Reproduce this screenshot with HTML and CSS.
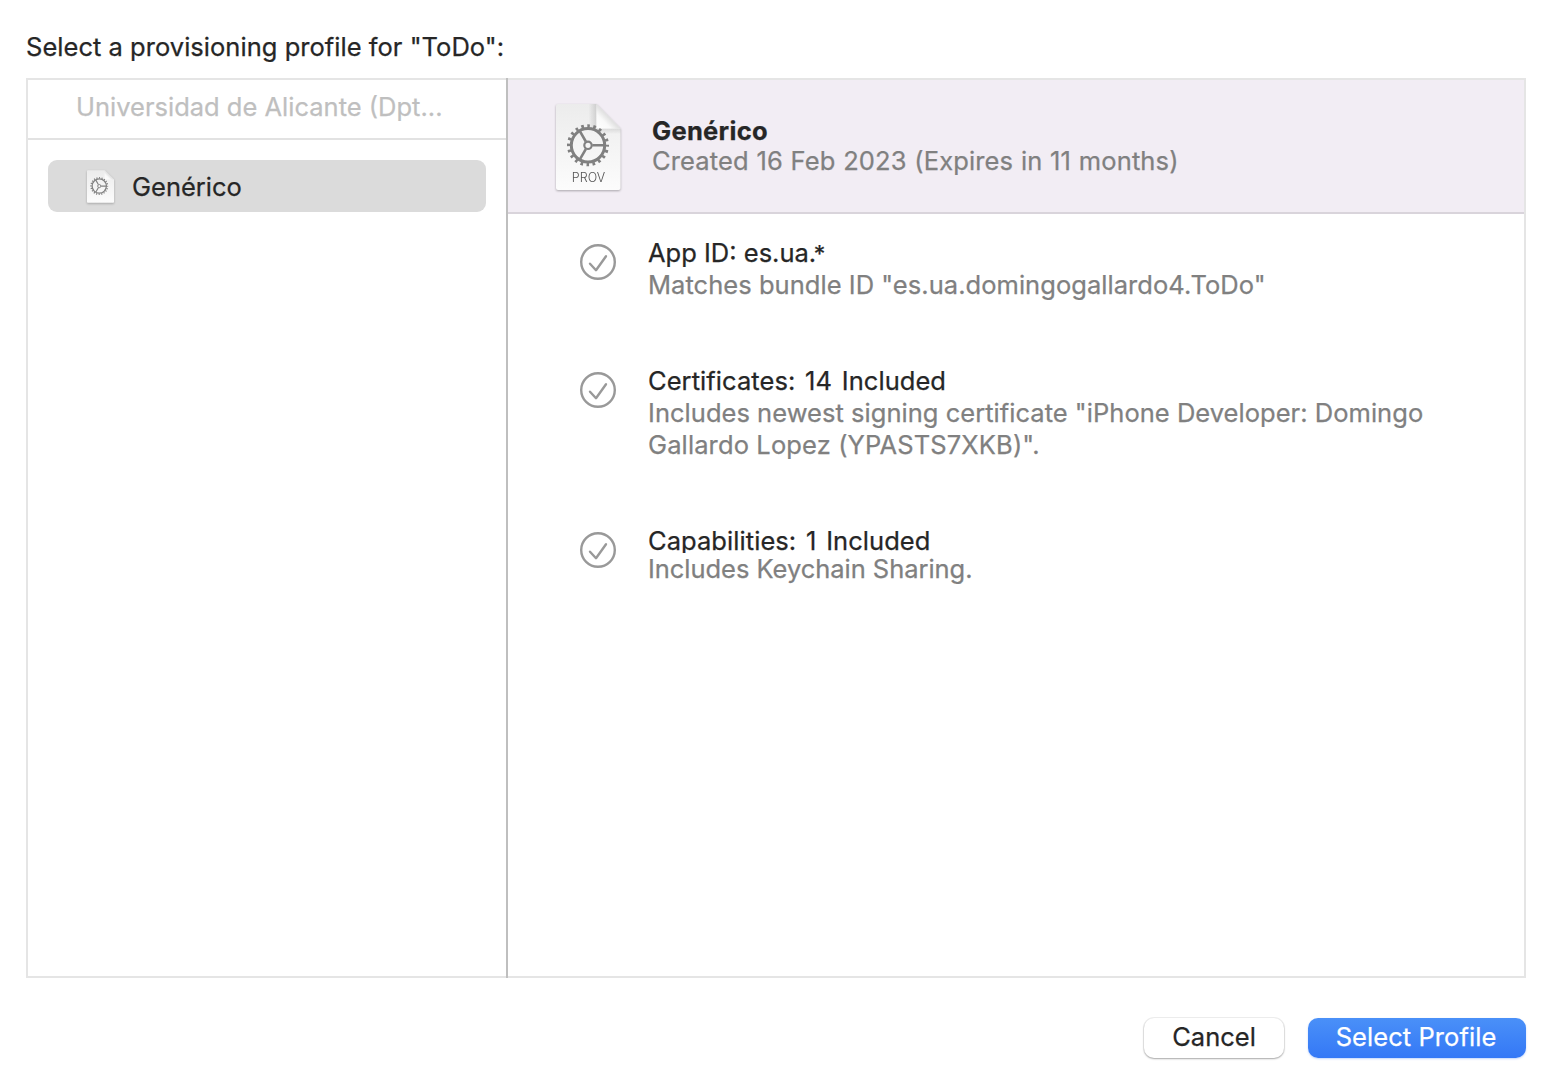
FILE: index.html
```html
<!DOCTYPE html>
<html lang="en">
<head>
<meta charset="utf-8">
<title>Select a provisioning profile</title>
<link rel="stylesheet" href="styles.css">
</head>
<body>
<svg class="defs" width="0" height="0" aria-hidden="true">
  <defs>
    <linearGradient id="paper" x1="0" y1="0" x2="0" y2="1"><stop offset="0" stop-color="#ececec"/><stop offset="1" stop-color="#fcfcfc"/></linearGradient>
    <linearGradient id="fold" x1="0" y1="1" x2="1" y2="0"><stop offset="0" stop-color="#ffffff"/><stop offset=".3" stop-color="#f9f9f9"/><stop offset=".52" stop-color="#dcdcdc"/></linearGradient>
    <linearGradient id="foldshade" x1="0" y1="0" x2="1" y2="0"><stop offset="0" stop-color="#000" stop-opacity="0"/><stop offset="1" stop-color="#000" stop-opacity=".13"/></linearGradient>
    <linearGradient id="foldshadedown" x1="0" y1="1" x2="0" y2="0"><stop offset="0" stop-color="#000" stop-opacity="0"/><stop offset="1" stop-color="#000" stop-opacity=".1"/></linearGradient>
    <symbol id="gear" viewBox="-22 -22 44 44">
      <g fill="none" stroke="#808080">
        <circle r="19.3" stroke-width="3.4" stroke-dasharray="2.6 3.464" stroke-dashoffset="1.3"/>
        <circle r="16.7" stroke-width="3"/>
        <circle r="3.7" stroke-width="2.2"/>
        <path d="M4.3 0H16M-2.2-3.8L-8-13.9M-2.2 3.8L-8 13.9" stroke-width="2.6"/>
      </g>
    </symbol>
    <symbol id="check" viewBox="0 0 38 38">
      <g fill="none" stroke="#999" stroke-width="2.4" stroke-linecap="round" stroke-linejoin="round">
        <circle cx="19" cy="19" r="16.8"/>
        <path d="M11 20.7L17 27.2L27 13.3"/>
      </g>
    </symbol>
  </defs>
</svg>
<main class="sheet">
  <h1 class="prompt">Select a provisioning profile for "ToDo":</h1>
  <section class="panel">
    <aside class="sidebar">
      <div class="team">Universidad de Alicante (Dpt...</div>
      <div class="item">
        <svg class="item-icon" viewBox="0 0 66 80"><path d="M2 0H43L66 23V78Q66 80 64 80H2Q0 80 0 78V2Q0 0 2 0Z" fill="url(#paper)"/><path d="M43 0V23H66Z" fill="url(#fold)"/><use href="#gear" x="7" y="16" width="46" height="46"/></svg>
        <span class="item-name">Genérico</span>
      </div>
    </aside>
    <div class="detail">
      <header class="profile">
        <svg class="profile-icon" viewBox="0 0 65 86"><path d="M2 0H40.5L64.5 24.5V84Q64.5 86 62.5 86H2Q0 86 0 84V2Q0 0 2 0Z" fill="url(#paper)"/><path d="M32.5 0H40.5V24H32.5Z" fill="url(#foldshade)"/><path d="M40.5 24.5H64.5V30H40.5Z" fill="url(#foldshadedown)"/><path d="M40.5 0V22.5Q40.5 24.5 42.5 24.5H64.5Z" fill="url(#fold)"/><use href="#gear" x="10" y="19.3" width="44" height="44"/><text class="doc-label" x="32.5" y="78.4" text-anchor="middle">PROV</text></svg>
        <div>
          <h2 class="profile-name">Genérico</h2>
          <p class="profile-date">Created 16 Feb 2023 (Expires in 11 months)</p>
        </div>
      </header>
      <ul class="checks">
        <li class="check app">
          <svg class="mark"><use href="#check"/></svg>
          <div><h3 class="t-app">App ID: es.ua.<span class="star">*</span></h3><p class="d-app">Matches bundle ID "es.ua.domingogallardo4.ToDo"</p></div>
        </li>
        <li class="check certs">
          <svg class="mark"><use href="#check"/></svg>
          <div><h3 class="t-count">Certificates: 14 Included</h3><p class="d-cert">Includes newest signing certificate "iPhone Developer: Domingo<br><span class="signer">Gallardo Lopez (YPASTS7XKB)".</span></p></div>
        </li>
        <li class="check caps">
          <svg class="mark"><use href="#check"/></svg>
          <div><h3 class="t-count">Capabilities: 1 Included</h3><p class="d-cap">Includes Keychain Sharing.</p></div>
        </li>
      </ul>
    </div>
  </section>
  <footer class="actions">
    <button class="btn cancel">Cancel</button>
    <button class="btn primary">Select Profile</button>
  </footer>
</main>
</body>
</html>
```
FILE: styles.css
```css
* { box-sizing: border-box; }
body { margin: 0; background: #fff; color: #262626; font: 25.5px/32px Inter, "Liberation Sans", sans-serif; -webkit-text-stroke: .25px currentColor; }
h1, h2, h3, p, ul { margin: 0; padding: 0; font-size: inherit; font-weight: 400; white-space: nowrap; }
.defs { position: absolute; }
.sheet { width: 1560px; height: 1080px; padding: 31px 34px 0 26px; }
.prompt { height: 47px; letter-spacing: .03px; }
.panel { display: flex; height: 900px; border: 2px solid #e5e5e5; }
.sidebar { width: 480px; margin: -2px 0; padding-top: 2px; border-right: 2px solid #bfbfbf; }
.team { height: 60px; padding: 11px 0 0 48px; border-bottom: 2px solid #e2e2e2; color: #bfbfbf; }
.item { display: flex; align-items: center; height: 52px; margin: 20px 20px 0; padding-left: 39px; gap: 17px; border-radius: 9px; background: #dbdbdb; }
.item-icon { width: 27px; height: 33px; filter: drop-shadow(0 1px 1px rgba(0,0,0,.25)); }
.item-name { padding: 1px 0 0 1px; }
.detail { flex: 1; }
.profile { display: flex; height: 134px; padding: 24px 0 0 48px; gap: 31px; border-bottom: 2px solid #d9d4db; background: #f2edf4; }
.profile-icon { width: 65px; height: 86px; filter: drop-shadow(0 1px 1px rgba(0,0,0,.3)); overflow: visible; }
.doc-label { font: 300 12.5px Inter, sans-serif; fill: #555; -webkit-text-stroke: 0; }
.profile-name { padding-top: 12px; line-height: 30px; font-weight: 700; letter-spacing: .3px; }
.profile-date { margin-top: -1px; line-height: 31px; color: #808080; letter-spacing: .12px; word-spacing: .45px; }
.checks { padding: 23px 0 0 71px; list-style: none; }
.check { display: flex; gap: 31px; }
.check p { color: #808080; }
.mark { width: 38px; height: 38px; margin-top: 6px; }
.app { height: 128px; }
.certs { height: 160px; }
.star { margin-left: -2.5px; font-size: 23px; line-height: 1; }
.t-count { letter-spacing: .06px; word-spacing: 2.5px; }
.d-app { letter-spacing: .04px; }
.d-cert { letter-spacing: .03px; }
.signer { letter-spacing: .12px; }
.d-cap { letter-spacing: -.04px; }
.caps h3 { height: 28px; overflow: hidden; }
.actions { display: flex; justify-content: flex-end; gap: 24px; padding-top: 40px; }
.btn { height: 40px; padding: 0 0 2px; border: 0; border-radius: 10px; font: inherit; color: inherit; background: #fff; }
.cancel { width: 140px; box-shadow: 0 0 0 1px rgba(0,0,0,.06), 0 1px 2px rgba(0,0,0,.3); }
.primary { width: 218px; padding-right: 2px; color: #fff; letter-spacing: .07px; background: linear-gradient(#4a90f8, #3478f6); box-shadow: 0 1px 2px rgba(52,120,246,.3); }
```
